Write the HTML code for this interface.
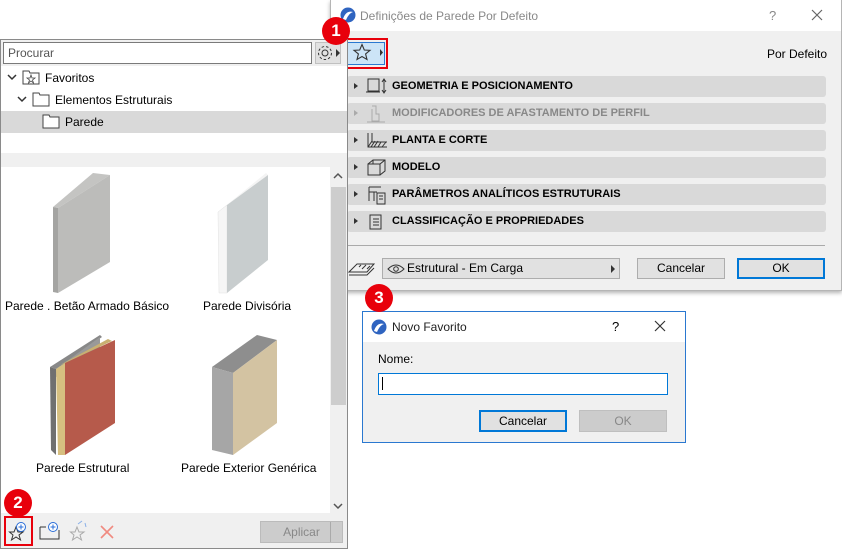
<!DOCTYPE html>
<html><head><meta charset="utf-8"><style>
*{box-sizing:border-box;margin:0;padding:0}
body{width:842px;height:549px;background:#fff;position:relative;overflow:hidden;font-family:"Liberation Sans",sans-serif;font-size:12px;color:#000}
.a{position:absolute}
.row{position:absolute;left:347px;width:479px;height:21px;background:#d9d9d9;border-radius:3px;font-weight:bold;font-size:11px;line-height:21px}
.row .t{position:absolute;left:45px}
.row .tri{position:absolute;left:7px;top:7px;width:0;height:0;border-left:4px solid #333;border-top:3.5px solid transparent;border-bottom:3.5px solid transparent}
.btn{position:absolute;background:#e1e1e1;border:1px solid #adadad;text-align:center;font-size:12px}
.badge{position:absolute;width:28px;height:28px;border-radius:50%;background:#e8000b;color:#fff;font-weight:bold;font-size:17px;text-align:center;line-height:28px}
</style></head><body>

<!-- RIGHT DIALOG -->
<div class="a" style="left:330px;top:0;width:512px;height:291px;background:#f0f0f0;border:1px solid #b5b5b5;box-shadow:0 2px 4px rgba(0,0,0,.3)"></div>
<div class="a" style="left:331px;top:0;width:510px;height:31px;background:#fff"></div>
<svg class="a" style="left:340px;top:7px" width="16" height="16"><circle cx="8" cy="8" r="7.5" fill="#2f64c0"/><path d="M3 12 Q6 3 13 5 Q9 6 6 13Z" fill="#fff"/></svg>
<div class="a" style="left:360px;top:9px;color:#888;font-size:12px">Definições de Parede Por Defeito</div>
<div class="a" style="left:769px;top:8px;color:#888;font-size:13px">?</div>
<svg class="a" style="left:811px;top:9px" width="12" height="12"><path d="M1 1L11 11M11 1L1 11" stroke="#666" stroke-width="1.2"/></svg>
<div class="a" style="left:346px;top:31px;width:1px;height:260px;background:#aaa"></div>
<div class="a" style="left:343px;top:38px;width:45px;height:31px;border:2px solid #e8000b"></div>
<div class="a" style="left:347px;top:42px;width:38px;height:23px;background:#cce4f7;border:1px solid #2a78d0"></div>
<svg class="a" style="left:352px;top:43px" width="32" height="20"><path d="M10 1.5 L12.3 7 L18 7.3 L13.6 11 L15 16.5 L10 13.5 L5 16.5 L6.4 11 L2 7.3 L7.7 7Z" fill="none" stroke="#333" stroke-width="1.1"/><path d="M28 6 L31 9.5 L28 13Z" fill="#333"/></svg>
<div class="a" style="left:767px;top:47px;font-size:12px">Por Defeito</div>

<div class="row" style="top:76px"><span class="tri"></span><span class="t">GEOMETRIA E POSICIONAMENTO</span></div>
<div class="row" style="top:103px;color:#888"><span class="tri" style="border-left-color:#aaa"></span><span class="t">MODIFICADORES DE AFASTAMENTO DE PERFIL</span></div>
<div class="row" style="top:130px"><span class="tri"></span><span class="t">PLANTA E CORTE</span></div>
<div class="row" style="top:157px"><span class="tri"></span><span class="t">MODELO</span></div>
<div class="row" style="top:184px"><span class="tri"></span><span class="t">PARÂMETROS ANALÍTICOS ESTRUTURAIS</span></div>
<div class="row" style="top:211px"><span class="tri"></span><span class="t">CLASSIFICAÇÃO E PROPRIEDADES</span></div>
<svg class="a" style="left:365px;top:76px" width="24" height="160">
<rect x="3" y="3" width="11" height="12" fill="none" stroke="#333"/><path d="M1 16 H15 M19 4 V16 M17 6 L19 3 L21 6 M17 14 L19 17 L21 14" stroke="#333" fill="none"/>
<path d="M7 33 V45 H14 V38 H11 V30 H7 M2 46 H20" stroke="#aaa" fill="none"/>
<path d="M3 57 V71 H22 M3 71 L7 65 M6 71 L10 65 M9 71 L13 65 M13 71 L16 66 M17 71 L21 66 M7 57 V66 H22" stroke="#333" fill="none"/>
<path d="M3 88 V99 H15 V88 Z M3 88 L8 84 H20 V95 L15 99 M15 88 L20 84 M8 84 V88" stroke="#333" fill="none"/>
<path d="M4 111 V125 M4 111 H16 M4 116 H12 M9 116 V125 M12 117 H20 V128 H12Z M14 120 H18 M14 123 H18" stroke="#333" fill="none"/>
<rect x="5" y="139" width="11" height="14" fill="none" stroke="#333"/><path d="M8 143 H14 M8 146 H14 M8 149 H14" stroke="#333"/>
</svg>
<div class="a" style="left:347px;top:245px;width:478px;height:1px;background:#aaa"></div>
<svg class="a" style="left:347px;top:259px" width="30" height="18"><path d="M2 13 L10 5 H27 L20 13Z M2 16 H20 L27 9" fill="none" stroke="#333"/><path d="M12 8 L14 6 M15 10 L19 6 M20 10 L23 7" stroke="#333"/></svg>
<div class="btn" style="left:382px;top:258px;width:238px;height:21px;line-height:19px;text-align:left;padding-left:24px">Estrutural - Em Carga</div>
<svg class="a" style="left:387px;top:263px" width="18" height="12"><path d="M1 6 Q9 -2 17 6 Q9 14 1 6Z" fill="none" stroke="#333"/><circle cx="9" cy="6" r="2.3" fill="none" stroke="#333"/></svg>
<svg class="a" style="left:610px;top:264px" width="6" height="10"><path d="M1 1 L5 5 L1 9Z" fill="#333"/></svg>
<div class="btn" style="left:637px;top:258px;width:88px;height:21px;line-height:19px">Cancelar</div>
<div class="btn" style="left:737px;top:258px;width:88px;height:21px;line-height:17px;border:2px solid #0078d7">OK</div>

<!-- LEFT PANEL -->
<div class="a" style="left:0;top:39px;width:348px;height:510px;border:1px solid #8a8a8a;background:#fff"></div>
<div class="a" style="left:1px;top:40px;width:346px;height:26px;background:#f0f0f0"></div>
<div class="a" style="left:3px;top:42px;width:309px;height:22px;border:1px solid #7a7a7a;background:#fff;padding-left:4px;line-height:20px;color:#555">Procurar</div>
<div class="a" style="left:315px;top:42px;width:26px;height:22px;background:#e1e1e1;border:1px solid #c0c0c0"></div>
<svg class="a" style="left:316px;top:44px" width="26" height="18"><circle cx="9" cy="9" r="3" fill="none" stroke="#333"/><circle cx="9" cy="9" r="6.5" fill="none" stroke="#333" stroke-dasharray="2.5 2"/><path d="M20 5 L24 9 L20 13Z" fill="#333"/></svg>
<svg class="a" style="left:7px;top:72px" width="10" height="10"><path d="M1 3 L5 7 L9 3" fill="none" stroke="#333" stroke-width="1.5"/></svg>
<svg class="a" style="left:22px;top:69px" width="18" height="16"><path d="M1 2 H7 L8 4 H17 V15 H1Z" fill="#fff" stroke="#444"/><path d="M9 6 L10 9 L13 9 L10.5 11 L11.5 14 L9 12 L6.5 14 L7.5 11 L5 9 L8 9Z" fill="none" stroke="#444" stroke-width=".8"/></svg>
<div class="a" style="left:45px;top:71px">Favoritos</div>
<svg class="a" style="left:17px;top:94px" width="10" height="10"><path d="M1 3 L5 7 L9 3" fill="none" stroke="#333" stroke-width="1.5"/></svg>
<svg class="a" style="left:32px;top:91px" width="19" height="16"><path d="M1 2 H7 L8 4 H17 V15 H1Z" fill="#fff" stroke="#444"/></svg>
<div class="a" style="left:55px;top:93px">Elementos Estruturais</div>
<div class="a" style="left:1px;top:111px;width:346px;height:22px;background:#d9d9d9"></div>
<svg class="a" style="left:42px;top:113px" width="19" height="16"><path d="M1 2 H7 L8 4 H17 V15 H1Z" fill="#fff" stroke="#444"/></svg>
<div class="a" style="left:65px;top:115px">Parede</div>
<div class="a" style="left:1px;top:153px;width:346px;height:14px;background:#f0f0f0"></div>
<div class="a" style="left:330px;top:167px;width:17px;height:346px;background:#f0f0f0"></div>
<div class="a" style="left:331px;top:187px;width:15px;height:218px;background:#cdcdcd"></div>
<svg class="a" style="left:333px;top:172px" width="10" height="8"><path d="M1 6 L5 2 L9 6" fill="none" stroke="#555" stroke-width="1.5"/></svg>
<svg class="a" style="left:333px;top:502px" width="10" height="8"><path d="M1 2 L5 6 L9 2" fill="none" stroke="#555" stroke-width="1.5"/></svg>
<svg class="a" style="left:0;top:167px" width="330" height="346">
<polygon points="53,40 93,6 110,8 58,41" fill="#c4c4c2"/>
<polygon points="53,40 58,41 58,126 53,125" fill="#a4a4a2"/>
<polygon points="58,41 110,8 110,95 58,126" fill="#bcbcba"/>
<polygon points="218,45 266,6 268,8 227,38" fill="#f4f4f4"/>
<polygon points="218,45 227,38 227,126 219,126" fill="#f6f6f6" stroke="#e2e2e2" stroke-width=".5"/>
<polygon points="227,38 268,8 268,93 227,126" fill="#c8cdce"/>
<polygon points="50,200 100,168 102,170 56,202" fill="#888"/>
<polygon points="50,200 56,202 56,288 51,283" fill="#707070"/>
<polygon points="56,202 100,170 100,180 56,210" fill="#999"/>
<polygon points="56,202 65,196 65,288 58,288" fill="#d6bf80"/>
<polygon points="60,198 108,172 112,174 65,196" fill="#c9b070"/>
<polygon points="65,196 115,173 115,256 65,288" fill="#b65a4b"/>
<polygon points="212,200 257,168 277,173 233,206" fill="#8e8e8e"/>
<polygon points="212,200 233,206 233,288 212,283" fill="#a6a6a6"/>
<polygon points="233,206 277,173 277,256 233,288" fill="#d3c3a2"/>
</svg>
<div class="a" style="left:5px;top:299px">Parede . Betão Armado Básico</div>
<div class="a" style="left:203px;top:299px">Parede Divisória</div>
<div class="a" style="left:36px;top:461px">Parede Estrutural</div>
<div class="a" style="left:181px;top:461px">Parede Exterior Genérica</div>
<div class="a" style="left:1px;top:513px;width:346px;height:35px;background:#f0f0f0"></div>
<div class="a" style="left:4px;top:516px;width:29px;height:30px;border:2px solid #e8000b"></div>
<svg class="a" style="left:6px;top:518px" width="120" height="26">
<path d="M7 8 L9 13 L14 13 L10 16 L11.5 21 L7 18 L2.5 21 L4 16 L0.5 13 L5 13Z" fill="none" stroke="#333" transform="translate(3,1)"/>
<circle cx="15" cy="9" r="4.5" fill="#fff" stroke="#2a6ed8"/><path d="M15 6.5V11.5M12.5 9H17.5" stroke="#2a6ed8"/>
<path d="M34 9 V21 H53 V12 M34 9 H40" fill="none" stroke="#333"/>
<circle cx="47" cy="9" r="4.5" fill="#fff" stroke="#2a6ed8"/><path d="M47 6.5V11.5M44.5 9H49.5" stroke="#2a6ed8"/>
<path d="M71 9 L73 14 L78 14 L74 17 L75.5 22 L71 19 L66.5 22 L68 17 L64.5 14 L69 14Z" fill="none" stroke="#aaa"/>
<path d="M72 6 L76 3 M79 5 L80 9" stroke="#8ab0e8" fill="none"/>
<path d="M95 8 L107 20 M107 8 L95 20" stroke="#f08a80" stroke-width="1.6"/>
</svg>
<div class="btn" style="left:260px;top:521px;width:83px;height:22px;line-height:20px;background:#ccc;border-color:#bbb;color:#888">Aplicar<span style="position:absolute;right:0;top:0;width:12px;height:20px;border-left:1px solid #aaa"></span></div>
<div class="badge" style="left:4px;top:489px">2</div>
<div class="badge" style="left:322px;top:17px">1</div>

<!-- SMALL DIALOG -->
<div class="a" style="left:362px;top:311px;width:324px;height:132px;background:#f0f0f0;border:1px solid #2a78d0"></div>
<div class="a" style="left:363px;top:312px;width:322px;height:30px;background:#fff"></div>
<svg class="a" style="left:371px;top:319px" width="16" height="16"><circle cx="8" cy="8" r="7.5" fill="#2f64c0"/><path d="M3 12 Q6 3 13 5 Q9 6 6 13Z" fill="#fff"/></svg>
<div class="a" style="left:392px;top:320px;font-size:12px;color:#222">Novo Favorito</div>
<div class="a" style="left:612px;top:319px;font-size:13px">?</div>
<svg class="a" style="left:654px;top:320px" width="12" height="12"><path d="M1 1L11 11M11 1L1 11" stroke="#333" stroke-width="1.2"/></svg>
<div class="a" style="left:378px;top:352px;font-size:12px">Nome:</div>
<div class="a" style="left:378px;top:373px;width:290px;height:22px;background:#fff;border:1px solid #0078d7"></div>
<div class="a" style="left:382px;top:377px;width:1px;height:13px;background:#000"></div>
<div class="btn" style="left:479px;top:410px;width:88px;height:22px;line-height:18px;border:2px solid #0078d7">Cancelar</div>
<div class="btn" style="left:579px;top:410px;width:88px;height:22px;line-height:20px;background:#ccc;border-color:#bfbfbf;color:#888">OK</div>
<div class="badge" style="left:365px;top:284px">3</div>
</body></html>
